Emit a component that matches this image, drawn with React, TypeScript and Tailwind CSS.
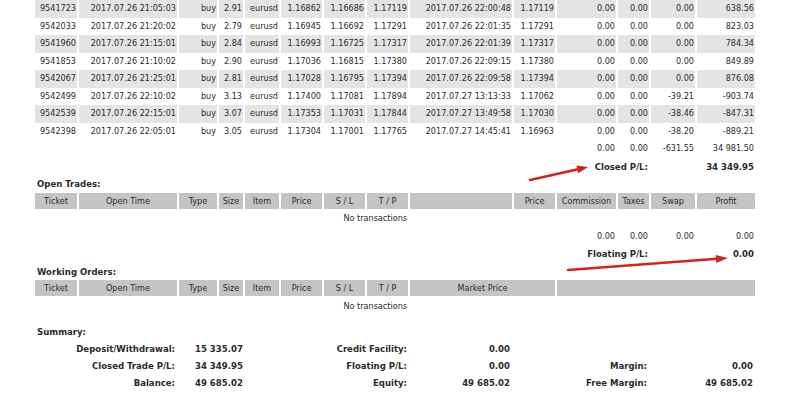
const cols = "grid grid-cols-[44px_100px_40px_26px_36px_43px_43px_43px_104px_43px_61px_33px_46px_60px]";
const summaryCols = "grid grid-cols-[144px_142px_88px_104px_137px_107px]";

const trades = [
    ["9541723", "2017.07.26 21:05:03", "buy", "2.91", "eurusd", "1.16862", "1.16686", "1.17119", "2017.07.26 22:00:48", "1.17119", "0.00", "0.00", "0.00", "638.56"],
    ["9542033", "2017.07.26 21:20:02", "buy", "2.79", "eurusd", "1.16945", "1.16692", "1.17291", "2017.07.26 22:01:35", "1.17291", "0.00", "0.00", "0.00", "823.03"],
    ["9541960", "2017.07.26 21:15:01", "buy", "2.84", "eurusd", "1.16993", "1.16725", "1.17317", "2017.07.26 22:01:39", "1.17317", "0.00", "0.00", "0.00", "784.34"],
    ["9541853", "2017.07.26 21:10:02", "buy", "2.90", "eurusd", "1.17036", "1.16815", "1.17380", "2017.07.26 22:09:15", "1.17380", "0.00", "0.00", "0.00", "849.89"],
    ["9542067", "2017.07.26 21:25:01", "buy", "2.81", "eurusd", "1.17028", "1.16795", "1.17394", "2017.07.26 22:09:58", "1.17394", "0.00", "0.00", "0.00", "876.08"],
    ["9542499", "2017.07.26 22:10:02", "buy", "3.13", "eurusd", "1.17400", "1.17081", "1.17894", "2017.07.27 13:13:33", "1.17062", "0.00", "0.00", "-39.21", "-903.74"],
    ["9542539", "2017.07.26 22:15:01", "buy", "3.07", "eurusd", "1.17353", "1.17031", "1.17844", "2017.07.27 13:49:58", "1.17030", "0.00", "0.00", "-38.46", "-847.31"],
    ["9542398", "2017.07.26 22:05:01", "buy", "3.05", "eurusd", "1.17304", "1.17001", "1.17765", "2017.07.27 14:45:41", "1.16963", "0.00", "0.00", "-38.20", "-889.21"],
];

const openHeader = ["Ticket", "Open Time", "Type", "Size", "Item", "Price", "S / L", "T / P", "", "Price", "Commission", "Taxes", "Swap", "Profit"];

const cell = "h-[17.5px] leading-[17.5px] border-r-2 border-white pr-px text-right whitespace-nowrap";
const head = "h-[16px] leading-[16px] border-r-2 border-white bg-[#c4c4c4] text-center whitespace-nowrap";

function Totals({ values }: { values: string[] }) {
    return (
        <div className={cols}>
            <div className={`${cell} col-span-10`}></div>
            {values.map((v, i) => (
                <div key={i} className={cell}>{v}</div>
            ))}
        </div>
    );
}

function Result({ label, value }: { label: string; value: string }) {
    return (
        <div className={`${cols} font-bold text-[9.5px]`}>
            <div className={`${cell} col-span-12`}>{label}</div>
            <div className={`${cell} col-span-2`}>{value}</div>
        </div>
    );
}

function Title({ text }: { text: string }) {
    return <div className="h-[17.5px] leading-[17.5px] pl-[2px] font-bold text-[9.5px]">{text}</div>;
}

function NoTransactions() {
    return (
        <div className={cols}>
            <div className={`${cell} col-span-8 pr-[11px]`}>No transactions</div>
        </div>
    );
}

function SummaryRow({ cells }: { cells: string[] }) {
    return (
        <div className={`${summaryCols} h-[17px] leading-[17px] font-bold text-[9.5px] whitespace-nowrap`}>
            <div className="text-right pr-[4px]">{cells[0]}</div>
            <div className="pl-[16px]">{cells[1]}</div>
            <div className="text-right pr-[2px]">{cells[2]}</div>
            <div className="text-right pr-[3px]">{cells[3]}</div>
            <div className="text-right pr-[3px]">{cells[4]}</div>
            <div className="text-right pr-[4px]">{cells[5]}</div>
        </div>
    );
}

export default function App() {
    return (
        <div className="relative w-[790px] h-[398px] overflow-hidden bg-white text-[#2b2b2b] text-[9px] font-['DejaVu_Sans_Condensed','DejaVu_Sans',sans-serif] font-stretch-condensed">
            <div className="ml-[35px] w-[722px]">
                {trades.map((row, r) => (
                    <div key={r} className={cols}>
                        {row.map((v, i) => (
                            <div key={i} className={`${cell} ${r % 2 === 0 ? "bg-[#e4e4e4]" : ""}`}>{v}</div>
                        ))}
                    </div>
                ))}
                <Totals values={["0.00", "0.00", "-631.55", "34 981.50"]} />
                <Result label="Closed P/L:" value="34 349.95" />

                <Title text="Open Trades:" />
                <div className={`${cols} mb-[1.5px]`}>
                    {openHeader.map((h, i) => (
                        <div key={i} className={head}>{h}</div>
                    ))}
                </div>
                <NoTransactions />
                <Totals values={["0.00", "0.00", "0.00", "0.00"]} />
                <Result label="Floating P/L:" value="0.00" />

                <Title text="Working Orders:" />
                <div className={`${cols} mb-[1.5px]`}>
                    {openHeader.slice(0, 8).map((h, i) => (
                        <div key={i} className={head}>{h}</div>
                    ))}
                    <div className={`${head} col-span-2`}>Market Price</div>
                    <div className={`${head} col-span-4`}></div>
                </div>
                <NoTransactions />

                <div className="mt-[7.5px] h-[17px] leading-[17px] pl-[2px] font-bold text-[9.5px]">Summary:</div>
                <SummaryRow cells={["Deposit/Withdrawal:", "15 335.07", "Credit Facility:", "0.00", "", ""]} />
                <SummaryRow cells={["Closed Trade P/L:", "34 349.95", "Floating P/L:", "0.00", "Margin:", "0.00"]} />
                <SummaryRow cells={["Balance:", "49 685.02", "Equity:", "49 685.02", "Free Margin:", "49 685.02"]} />
            </div>

            {/* red arrows drawn on top of the statement */}
            <svg className="absolute inset-0 pointer-events-none" width="790" height="398" viewBox="0 0 790 398">
                <line x1="530" y1="180" x2="578" y2="169.3" stroke="#d42222" strokeWidth="2.5" strokeLinecap="round" />
                <polygon points="588,167 578.2,173.3 576.4,165.5" fill="#d42222" />
                <line x1="568" y1="270" x2="717" y2="258.8" stroke="#d42222" strokeWidth="2.5" strokeLinecap="round" />
                <polygon points="728,258 716.3,262.9 715.7,254.9" fill="#d42222" />
            </svg>
        </div>
    );
}
